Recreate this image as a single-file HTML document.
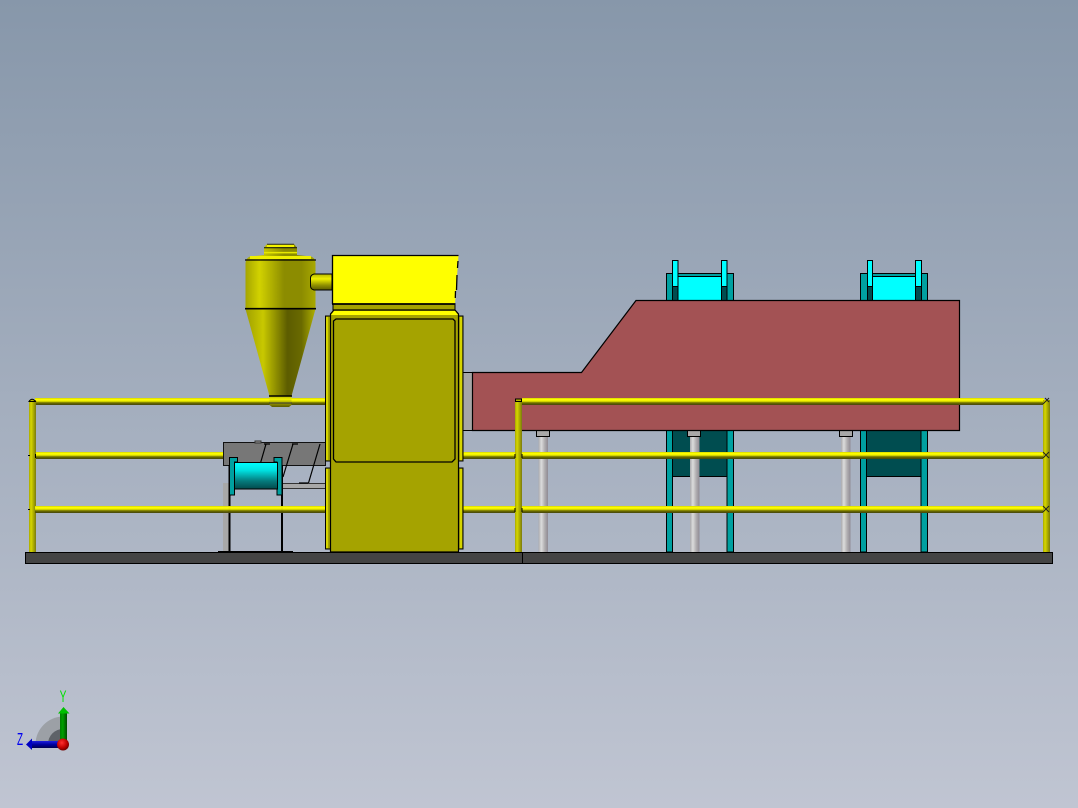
<!DOCTYPE html>
<html>
<head>
<meta charset="utf-8">
<style>
html,body{margin:0;padding:0;width:1078px;height:808px;overflow:hidden;background:#a5aebd}
svg{display:block;position:absolute;left:0;top:0}
text{font-family:"Liberation Sans",sans-serif}
</style>
</head>
<body>
<svg width="1078" height="808" viewBox="0 0 1078 808" xmlns="http://www.w3.org/2000/svg">
<defs>
<linearGradient id="bg" x1="0" y1="0" x2="0" y2="1">
<stop offset="0" stop-color="#8797aa"/>
<stop offset="1" stop-color="#c0c5d2"/>
</linearGradient>
<linearGradient id="rail" x1="0" y1="0" x2="0" y2="1">
<stop offset="0" stop-color="#d0d000"/>
<stop offset=".18" stop-color="#ffff00"/>
<stop offset=".45" stop-color="#eeee00"/>
<stop offset=".62" stop-color="#8a8a00"/>
<stop offset=".85" stop-color="#525200"/>
<stop offset="1" stop-color="#4a4a14"/>
</linearGradient>
<linearGradient id="post" x1="0" y1="0" x2="1" y2="0">
<stop offset="0" stop-color="#a8a800"/>
<stop offset=".3" stop-color="#d6d600"/>
<stop offset=".65" stop-color="#aaaa00"/>
<stop offset="1" stop-color="#7a7a10"/>
</linearGradient>
<linearGradient id="cyl" x1="0" y1="0" x2="1" y2="0">
<stop offset="0" stop-color="#a5a500"/>
<stop offset=".2" stop-color="#d2d200"/>
<stop offset=".55" stop-color="#8c8c00"/>
<stop offset=".8" stop-color="#8c8c00"/>
<stop offset="1" stop-color="#a8a800"/>
</linearGradient>
<linearGradient id="cone" x1="0" y1="0" x2="1" y2="0">
<stop offset="0" stop-color="#a0a000"/>
<stop offset=".25" stop-color="#c8c800"/>
<stop offset=".6" stop-color="#5c5c00"/>
<stop offset=".8" stop-color="#6a6a00"/>
<stop offset="1" stop-color="#b0b000"/>
</linearGradient>
<linearGradient id="pipe" x1="0" y1="0" x2="0" y2="1">
<stop offset="0" stop-color="#b5b500"/>
<stop offset=".3" stop-color="#f0f000"/>
<stop offset=".7" stop-color="#909000"/>
<stop offset="1" stop-color="#5a5a00"/>
</linearGradient>
<linearGradient id="drum" x1="0" y1="0" x2="0" y2="1">
<stop offset="0" stop-color="#00ffff"/>
<stop offset=".3" stop-color="#00e0e0"/>
<stop offset=".7" stop-color="#047a7c"/>
<stop offset="1" stop-color="#024a4c"/>
</linearGradient>
<linearGradient id="col" x1="0" y1="0" x2="1" y2="0">
<stop offset="0" stop-color="#a9a9ad"/>
<stop offset=".3" stop-color="#dcdcdc"/>
<stop offset=".65" stop-color="#b0aeb0"/>
<stop offset="1" stop-color="#8f8a94"/>
</linearGradient>
<linearGradient id="gz" x1="0" y1="0" x2="1" y2="0">
<stop offset="0" stop-color="#008000"/>
<stop offset=".4" stop-color="#00a000"/>
<stop offset="1" stop-color="#004a00"/>
</linearGradient>
<linearGradient id="bz" x1="0" y1="0" x2="0" y2="1">
<stop offset="0" stop-color="#2020e0"/>
<stop offset=".5" stop-color="#0000a0"/>
<stop offset="1" stop-color="#000050"/>
</linearGradient>
<radialGradient id="ball" cx=".4" cy=".35" r=".7">
<stop offset="0" stop-color="#ff3030"/>
<stop offset=".6" stop-color="#c00000"/>
<stop offset="1" stop-color="#600000"/>
</radialGradient>
</defs>

<rect width="1078" height="808" fill="url(#bg)"/>

<!-- rear frames: top parts -->
<g stroke="#000" stroke-width="1.2" shape-rendering="crispEdges">
<rect x="666.5" y="273.5" width="67" height="27" fill="#00a0a0"/>
<rect x="678" y="276.5" width="44" height="24" fill="#00ffff"/>
<rect x="672.5" y="260.5" width="5.5" height="26" fill="#00ffff"/>
<rect x="672.5" y="286.5" width="5.5" height="14" fill="#004d50"/>
<rect x="721.5" y="260.5" width="5.5" height="26" fill="#00ffff"/>
<rect x="721.5" y="286.5" width="5.5" height="14" fill="#004d50"/>

<rect x="860.5" y="273.5" width="67" height="27" fill="#00a0a0"/>
<rect x="872" y="276.5" width="44" height="24" fill="#00ffff"/>
<rect x="867.5" y="260.5" width="5" height="26" fill="#00ffff"/>
<rect x="867.5" y="286.5" width="5" height="14" fill="#004d50"/>
<rect x="915.5" y="260.5" width="6" height="26" fill="#00ffff"/>
<rect x="915.5" y="286.5" width="6" height="14" fill="#004d50"/>

<!-- lower frames -->
<rect x="672" y="430" width="55" height="46.5" fill="#004d50"/>
<rect x="666.5" y="430" width="6" height="122" fill="#00a0a0"/>
<rect x="727" y="430" width="6.5" height="122" fill="#00a0a0"/>
<rect x="866" y="430" width="55" height="46.5" fill="#004d50"/>
<rect x="860.5" y="430" width="6" height="122" fill="#00a0a0"/>
<rect x="921" y="430" width="6.5" height="122" fill="#00a0a0"/>
</g>

<!-- columns -->
<rect x="538.5" y="436" width="9.5" height="116" fill="url(#col)"/>
<rect x="690" y="436" width="9.5" height="116" fill="url(#col)"/>
<rect x="841" y="436" width="9.5" height="116" fill="url(#col)"/>
<g fill="#a8a8a8" stroke="#000" stroke-width="1" shape-rendering="crispEdges">
<rect x="536.5" y="430.5" width="13" height="6"/>
<rect x="687.5" y="430.5" width="13" height="6"/>
<rect x="839.5" y="430.5" width="13" height="6"/>
</g>

<!-- red housing -->
<rect x="463" y="372.5" width="9.5" height="58" fill="#a6a6a6" stroke="#000" stroke-width="1"/>
<polygon points="472.5,372.5 581.5,372.5 636,300.5 959.5,300.5 959.5,430.5 472.5,430.5" fill="#a35254" stroke="#000" stroke-width="1.2"/>

<!-- rails -->
<rect x="35" y="398" width="292" height="7" fill="url(#rail)"/>
<rect x="522" y="398" width="522" height="7" fill="url(#rail)"/>
<rect x="35" y="452" width="189" height="7" fill="url(#rail)"/>
<rect x="462" y="452" width="582" height="7" fill="url(#rail)"/>
<rect x="35" y="506" width="292" height="7" fill="url(#rail)"/>
<rect x="462" y="506" width="582" height="7" fill="url(#rail)"/>

<!-- posts -->
<rect x="29" y="400" width="7" height="152" fill="url(#post)"/>
<rect x="515" y="400" width="7" height="152" fill="url(#post)"/>
<rect x="1043" y="400" width="7" height="152" fill="url(#post)"/>
<path d="M29 401.5 Q32 397 35.500 401.500 Z" fill="#b8b800" stroke="#000" stroke-width="1"/>
<path d="M515.500 401.500 V399 H521.500 V401.500 Z" fill="#b8b800" stroke="#000" stroke-width="1"/>
<path d="M28 455.500 H30 M28 509.500 H30 M515 454 V458 M515 508 V512 M522 454 V458 M522 508 V512 M35.500 454 V458 M35.500 508 V512" stroke="#000" stroke-width="1"/>
<path d="M1043 404 L1049 398 M1045 398 L1049 402 M1043 458 L1049 452 M1043 452 L1049 458 M1043 512 L1049 506 M1043 506 L1049 512" stroke="#222" stroke-width="1" fill="none"/>

<!-- base -->
<rect x="25.500" y="552.500" width="1027" height="11" fill="#444" stroke="#000" stroke-width="1.2" shape-rendering="crispEdges"/>
<path d="M522.500 552 V564" stroke="#000" stroke-width="1.2" shape-rendering="crispEdges"/>

<!-- screw conveyor -->
<g shape-rendering="crispEdges">
<rect x="223" y="483" width="6" height="69" fill="#a8a8a8"/>
<rect x="282" y="483.500" width="44" height="5" fill="#a8a8a8" stroke="#333" stroke-width="1"/>
<rect x="223.500" y="442.500" width="102" height="23" fill="#777" stroke="#111" stroke-width="1"/>
<rect x="255" y="441" width="6" height="2" fill="#999" stroke="#333" stroke-width=".6"/>
<path d="M229.500 465 V552 M282 465 V552" stroke="#000" stroke-width="1.6"/>
<path d="M218 551.500 H293" stroke="#000" stroke-width="1.4"/>
</g>
<path d="M266 444 L260.500 463 M293 444 L283 477 M320 444 L308.500 483 M264 444 H270 M292 444 H298 M299 483 H308" stroke="#000" stroke-width="1.2" fill="none"/>
<rect x="35" y="506" width="292" height="7" fill="url(#rail)" opacity=".97"/>
<g shape-rendering="crispEdges">
<path d="M229.500 457.500 H237.500 V462 H234.500 V495 H229.500 Z" fill="#00a0a0" stroke="#000" stroke-width="1"/>
<path d="M282 457.500 H274 V462 H277 V495 H282 Z" fill="#00a0a0" stroke="#000" stroke-width="1"/>
<rect x="234.500" y="462.500" width="43" height="26.500" fill="url(#drum)" stroke="#000" stroke-width="1"/>
</g>

<!-- cyclone -->
<path d="M245.500 309 V263 Q246 258 250 256.500 L264 255 V247.500 L267 244 H294 L297 247.500 V255 L311 256.500 Q315.500 258 315.500 263 V309 Z" fill="url(#cyl)"/>
<path d="M267 245.800 H294" stroke="#f4f400" stroke-width="2.500"/>
<path d="M267 244.300 H294" stroke="#222" stroke-width="1"/>
<path d="M264 247.800 H297" stroke="#111" stroke-width="1"/>
<path d="M264 252.600 H297" stroke="#e8e800" stroke-width="1.500"/>
<path d="M250 257.500 H311" stroke="#f0f000" stroke-width="3"/>
<path d="M245 260 H316" stroke="#000" stroke-width="1.300"/>
<path d="M332 274 H314 Q310.500 275 310.500 278 V286 Q310.500 289 314 290 H332 Z" fill="url(#pipe)" stroke="#000" stroke-width="1"/>
<polygon points="245.500,309 315.500,309 291.500,396 269.500,396" fill="url(#cone)"/>
<path d="M269.500 396 H291.500 V405 L289 407 H272 L269.500 405 Z" fill="url(#pipe)"/>
<path d="M245 308.700 H316" stroke="#000" stroke-width="1.600"/>
<path d="M269 396 H292" stroke="#000" stroke-width="1.500"/>
<path d="M269 403 H292" stroke="#333" stroke-width="1"/>

<!-- machine body -->
<g stroke="#000" stroke-width="1.200" shape-rendering="crispEdges">
<rect x="325.500" y="316" width="5" height="145" fill="#a5a300"/>
<rect x="325.500" y="468" width="5" height="81" fill="#a5a300"/>
<rect x="458.500" y="316" width="4.500" height="145" fill="#a5a300"/>
<rect x="458.500" y="468" width="4.500" height="81" fill="#a5a300"/>
</g>
<path d="M327 317 V460 M327 469 V548 M461 317 V460 M461 469 V548" stroke="#e6e600" stroke-width="1.500"/>
<polygon points="333,304 455,304 455,310 333,310" fill="#a5a300" stroke="#000" stroke-width="1"/>
<polygon points="330.500,552 330.500,314 334,310 455,310 458.500,314 458.500,552" fill="#a5a300" stroke="#000" stroke-width="1.200"/>
<polygon points="331,315 334,311 455,311 458,315" fill="#ffff00"/>
<path d="M333.500 321 L336 319 H453 L455 321 V459 L452 462 H336 L333.500 459 Z" fill="#a5a300" stroke="#000" stroke-width="1.300"/>
<polygon points="332.500,255.500 458.500,255.500 455,304 332.500,304" fill="#ffff00"/>
<path d="M332.500 304 V255.500 H458.500" fill="none" stroke="#000" stroke-width="1.300"/>
<path d="M332 304 H455.500" stroke="#000" stroke-width="1.800"/>
<path d="M458 261 L457.500 268 M457 275 L456.500 290 M455.500 291 L455.300 298" stroke="#000" stroke-width="1.300"/>

<!-- triad -->
<path d="M35.500 744 A28 28 0 0 1 63 716.500 V744 Z" fill="#9ca0a6"/>
<path d="M48 744 A15 15 0 0 1 63 729 V744 Z" fill="#5e6268"/>
<rect x="60" y="712" width="7" height="30" fill="url(#gz)"/>
<polygon points="63.500,707 69.500,713.500 58,713.500" fill="#00c000"/>
<rect x="31" y="741" width="30" height="7" fill="url(#bz)"/>
<polygon points="26,744.500 32,738.500 32,750" fill="#0000c0"/>
<circle cx="63" cy="744.500" r="6" fill="url(#ball)"/>
<text transform="translate(63 702) scale(.62 1)" font-size="16.500" fill="#00e000" text-anchor="middle">Y</text>
<text transform="translate(20 745) scale(.55 1)" font-size="18" fill="#0000f0" text-anchor="middle">Z</text>
</svg>
</body>
</html>
